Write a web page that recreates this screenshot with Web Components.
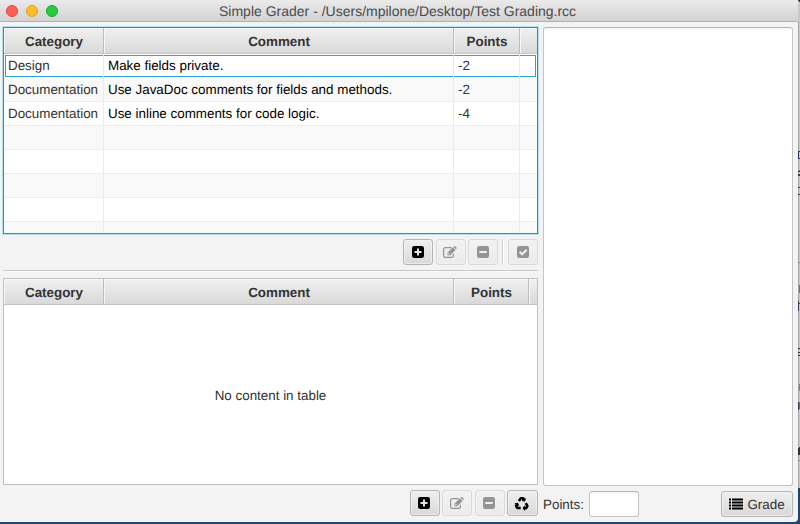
<!DOCTYPE html>
<html lang="en">
<head>
<meta charset="utf-8">
<title>Simple Grader</title>
<style>
html,body{margin:0;width:800px;height:524px;overflow:hidden;background:#25426f;font:13.4px "Liberation Sans",Arial,sans-serif;color:#333;text-rendering:geometricPrecision}
</style>
</head>
<body>
<grader-app></grader-app>
<script>
const define = (name, html, setup) => {
  const t = document.createElement('template');
  t.innerHTML = html;
  customElements.define(name, class extends HTMLElement {
    connectedCallback() {
      if (this.shadowRoot) return;
      this.attachShadow({mode: 'open'}).append(t.content.cloneNode(true));
      if (setup) setup(this, this.shadowRoot);
    }
  });
};

const ARROW = 'M2.800 3.600 4.500.7Q5 0 5.800 0h2.400q.7 0 1.100.6l.7 1.100 1.200-.6-1.300 3.300-3.500-.3 1-.7L6.600 2 5.100 4.800z';
const ICONS = {
  plus: '<path fill-rule="evenodd" d="M2.2 0h7.6A2.2 2.2 0 0 1 12 2.2v7.6A2.2 2.2 0 0 1 9.8 12H2.2A2.2 2.2 0 0 1 0 9.8V2.2A2.2 2.2 0 0 1 2.2 0zM5 2.5V5H2.5v2H5v2.5h2V7h2.500V5H7V2.500z"/>',
  minus: '<path fill-rule="evenodd" d="M2.2 0h7.6A2.2 2.2 0 0 1 12 2.2v7.6A2.2 2.2 0 0 1 9.8 12H2.2A2.2 2.2 0 0 1 0 9.8V2.2A2.2 2.2 0 0 1 2.2 0zM2.300 5v2h7.400V5z"/>',
  check: '<path fill-rule="evenodd" d="M2.200 0h7.600A2.200 2.200 0 0 1 12 2.200v7.600A2.200 2.200 0 0 1 9.800 12H2.200A2.200 2.200 0 0 1 0 9.800V2.200A2.200 2.200 0 0 1 2.200 0zM5.200 9.800 10.500 4.500 9 3 5.200 6.800 3.400 5 1.900 6.500z"/>',
  edit: '<path fill="none" stroke="currentColor" stroke-width="1.200" d="M8.600 1.600H2.500A1.900 1.900 0 0 0 .6 3.500v6A1.900 1.900 0 0 0 2.500 11.400h6a1.900 1.900 0 0 0 1.900-1.900V7.800"/><path fill-rule="evenodd" d="M4.500 9.200V6.500L9.800 1.200l2.700 2.700L7.200 9.200zM5.400 7v1.300h1.100l.4-.4L5.800 6.600zM10.400.8l.5-.5q.6-.5 1.200 0l1.300 1.300q.5.600 0 1.200l-.5.500z"/>',
  recycle: [0, 120, 240].map(a => `<path d="${ARROW}" transform="rotate(${a} 6.800 7.100)"/>`).join(''),
  list: '<path d="M0 .5h2v2H0zM3 .5h11v2H3zM0 3.500h2v2H0zM3 3.500h11v2H3zM0 6.500h2v2H0zM3 6.500h11v2H3zM0 9.500h2v2H0zM3 9.500h11v2H3z"/>'
};
const SIZES = {plus:[12,12], minus:[12,12], check:[12,12], edit:[14,12], recycle:[14,13], list:[14,12]};

define('glyph-icon', `<style>:host{display:block;flex:none}svg{display:block;fill:currentColor;overflow:visible}</style><svg></svg>`, (el, r) => {
  const n = el.getAttribute('name'), [w, h] = SIZES[n], s = r.querySelector('svg');
  s.setAttribute('width', w); s.setAttribute('height', h);
  s.setAttribute('viewBox', `0 0 ${w} ${h}`);
  s.innerHTML = ICONS[n];
});

define('tool-button', `<style>
:host{display:flex;box-sizing:border-box;width:30px;height:26px;flex:none;align-items:center;justify-content:center;gap:3px;
 border:1px solid #b5b5b5;border-radius:3px;background:linear-gradient(#efefef,#d9d9d9);box-shadow:inset 0 0 0 1px #f3f3f3aa;color:#000}
:host([disabled]){border-color:#d9d9d9;background:linear-gradient(#f2f2f2,#ebebeb);color:#949494}
span{color:#333}
::slotted(glyph-icon){margin-right:1px}
</style><slot name="icon"></slot><span><slot></slot></span>`, (el, r) => {
  if (!el.textContent.trim()) r.querySelector('span').remove();
});

define('title-bar', `<style>
:host{display:flex;flex:none;box-sizing:border-box;height:22px;align-items:center;padding-left:6px;background:linear-gradient(#ebebeb,#d2d2d2);border-bottom:1px solid #b0b0b0;color:#4a4a4a}
i{width:12px;height:12px;border-radius:50%;margin-right:8px;box-sizing:border-box;border:1px solid #e2463f;background:#ff5f57;margin-top:1px}
i:nth-of-type(2){background:#ffbd2e;border-color:#e1a116}i:nth-of-type(3){background:#28ca42;border-color:#12ac28}
b{flex:1;font-weight:400;padding-left:153px;font-size:14px;white-space:nowrap;line-height:16px;padding-top:1px}
</style><i></i><i></i><i></i><b><slot></slot></b>`);

define('data-table', `<style>
:host{display:flex;flex-direction:column;position:relative;box-sizing:border-box;width:535px;height:207px;flex:none;border:1px solid #c0c0c0;background:#fff;overflow:hidden}
:host([focused]){border-color:#0f9cca;box-shadow:0 0 0 1px #b5dfed;overflow:visible}
.clip{overflow:hidden;flex:1;min-height:0;display:flex;flex-direction:column}
.row{display:grid;grid-template-columns:var(--cols);height:24px;flex:none;box-sizing:border-box}
.head{height:26px;background:linear-gradient(#f0f0f0,#d9d9d9);font-weight:700;border-bottom:1px solid #c3c3c3;font-size:13.400px}
.head span{justify-content:center;border-right:1px solid #bdbdbd;box-shadow:inset 1px 1px #f6f6f6;padding:1px 0 0 1px}
.head span:last-child{border-right:0}
span{display:flex;align-items:center;box-sizing:border-box;border-right:1px solid #ebebeb;padding:0 0 1px 4px;white-space:nowrap}
.body span:last-child{border-right:0}
.body{border-bottom:1px solid #ededed;background:#fff}
.body span:nth-child(2){color:#000}
.alt{background:#f9f9f9}
.sel{border-bottom-color:#fff;background:linear-gradient(#2aa4d2,#2aa4d2) 1px 1px/531px 1px no-repeat,linear-gradient(#2aa4d2,#2aa4d2) 1px 22px/531px 1px no-repeat,linear-gradient(#2aa4d2,#2aa4d2) 1px 1px/1px 22px no-repeat,linear-gradient(#2aa4d2,#2aa4d2) 531px 1px/1px 22px no-repeat,#fff}
.empty{flex:1;display:flex;align-items:center;justify-content:center;padding-top:1px}
</style><div class="clip"></div>`, (el, r) => {
  const clip = r.querySelector('.clip');
  el.style.setProperty('--cols', el.getAttribute('cols'));
  const row = (cls, cells) => {
    const d = document.createElement('div'); d.className = 'row ' + cls;
    cells.forEach(c => { const s = document.createElement('span'); s.textContent = c; d.append(s); });
    clip.append(d);
  };
  row('head', ['Category', 'Comment', 'Points', '']);
  const rows = JSON.parse(el.getAttribute('rows') || '[]');
  if (!rows.length) {
    const e = document.createElement('div'); e.className = 'empty'; e.textContent = 'No content in table'; clip.append(e);
  } else for (let i = 0; i < 8; i++)
    row('body' + (i % 2 ? ' alt' : '') + (i ? '' : ' sel'), [...(rows[i] || ['', '', '']), '']);
});

define('desktop-edge', `<style>:host{display:block;width:2px;height:524px}svg{display:block}</style>
<svg width="2" height="524" shape-rendering="crispEdges">
<path fill="#c9c9c9" d="M0 0h2v488H0z"/><path fill="#a5a5a5" d="M0 22h1v466H0z"/><path fill="#25426f" d="M0 488h2v36H0z"/>
<path fill="#293a57" d="M0 0h2v2H1V1H0zM0 152h1v6H0zM0 151h2v1H0zM0 158h2v1H0zM0 171h2v1H0zM0 174h2v2H0zM0 187h2v1H0zM0 194h2v1H0z"/>
<path fill="#8c6845" d="M1 285h1v8H1zM1 170h1v1H1zM1 402h1v7H1z"/><path fill="#403b57" d="M0 301h1v10H0zM1 303h1v1H1zM0 402h1v8H0z"/>
<path fill="#333" d="M0 348h2v1H0zM0 352h2v1H0zM0 355h2v1H0zM0 448h1v7H0zM1 447h1v8H1z"/>
<path fill="#4993c1" d="M0 387h2v1H0zM1 384h1v7H1z"/><path fill="#888" d="M0 262h2v1H0zM0 460h2v1H0z"/></svg>`);

define('grader-app', `<style>
:host{display:flex;width:800px;height:524px}
.win{display:flex;flex-direction:column;width:798px;height:522px;background:#f3f3f3;border-radius:0 0 4px 0;overflow:hidden}
.main{flex:1;min-height:0;display:grid;grid-template-columns:535px 250px;column-gap:5px;padding:5px 5px 0 3px}
.left,.right{display:flex;flex-direction:column}
.tools{display:flex;flex:none;justify-content:flex-end;gap:2.5px;padding-top:5px;height:26px}
.sep{width:1px;height:26px;background:#d0d0d0;margin:0 3px 0 1px;box-shadow:1px 0 #fff}
.rule{flex:none;height:1px;background:#c8c8c8;margin:5px 0 7px;box-shadow:0 1px #fafafa}
.note{box-sizing:border-box;flex:none;height:459px;border:1px solid #c4c4c4;border-top-color:#b5b5b5;border-radius:3px;background:linear-gradient(#f5f5f5,#fff 4px)}
.foot{display:flex;align-items:center;margin-top:5px;height:26px}
.field{box-sizing:border-box;width:50px;height:26px;border:1px solid #c4c4c4;border-top-color:#b5b5b5;border-radius:3px;margin-left:5px;background:linear-gradient(#f4f4f4,#fff 4px)}
.grade{width:72px;margin-left:auto}
.lbl{width:41px;white-space:nowrap}
</style>
<div class="win">
<title-bar>Simple Grader - /Users/mpilone/Desktop/Test Grading.rcc</title-bar>
<div class="main">
 <div class="left">
  <data-table focused cols="100px 350px 66px 17px" rows='[["Design","Make fields private.","-2"],["Documentation","Use JavaDoc comments for fields and methods.","-2"],["Documentation","Use inline comments for code logic.","-4"]]'></data-table>
  <div class="tools">
   <tool-button><glyph-icon slot="icon" name="plus"></glyph-icon></tool-button>
   <tool-button disabled><glyph-icon slot="icon" name="edit"></glyph-icon></tool-button>
   <tool-button disabled><glyph-icon slot="icon" name="minus"></glyph-icon></tool-button>
   <div class="sep"></div>
   <tool-button disabled><glyph-icon slot="icon" name="check"></glyph-icon></tool-button>
  </div>
  <div class="rule"></div>
  <data-table cols="100px 350px 75px 8px"></data-table>
  <div class="tools">
   <tool-button><glyph-icon slot="icon" name="plus"></glyph-icon></tool-button>
   <tool-button disabled><glyph-icon slot="icon" name="edit"></glyph-icon></tool-button>
   <tool-button disabled><glyph-icon slot="icon" name="minus"></glyph-icon></tool-button>
   <tool-button style="width:31px"><glyph-icon slot="icon" name="recycle"></glyph-icon></tool-button>
  </div>
 </div>
 <div class="right">
  <div class="note"></div>
  <div class="foot"><span class="lbl">Points:</span><div class="field"></div><tool-button class="grade"><glyph-icon slot="icon" name="list"></glyph-icon>Grade</tool-button></div>
 </div>
</div>
</div>
<desktop-edge></desktop-edge>`);
</script>
</body>
</html>
